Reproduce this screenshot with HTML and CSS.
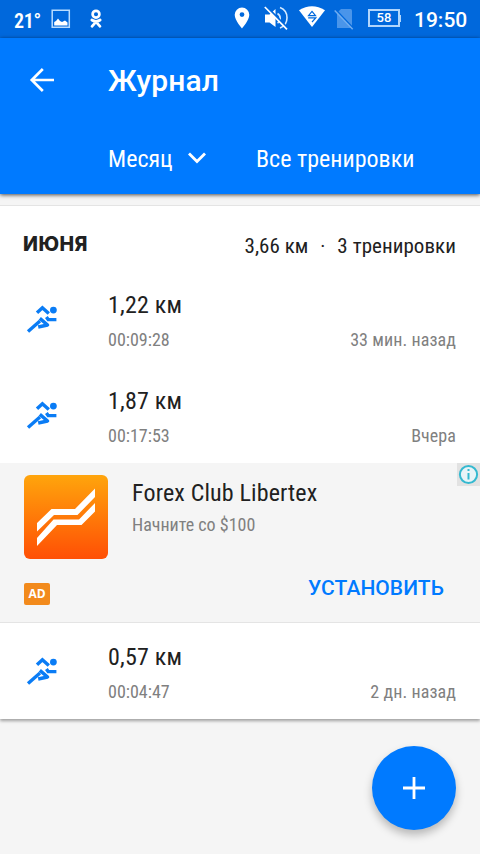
FILE: index.html
```html
<!DOCTYPE html>
<html lang="ru">
<head>
<meta charset="utf-8">
<title>Журнал</title>
<link rel="stylesheet" href="styles.css">
</head>
<body>
<svg class="defs" width="0" height="0">
  <symbol id="runner" viewBox="0 0 36 36">
    <circle cx="29.4" cy="9.1" r="3.4" fill="#0a7cf5"/>
    <g fill="none" stroke="#0a7cf5" stroke-width="3.4">
      <path d="M13 11.8 18.4 6.8 24.8 12.6"/>
      <path d="M32.4 18.6H24.2L22.4 16"/>
      <path d="M4 30.5 16 20"/>
      <path d="M15.8 17.4 23.6 24 14.2 26" stroke-linejoin="round"/>
    </g>
  </symbol>
</svg>
<div class="status">
  <span class="temp">21°</span>
  <svg class="s-pic" width="20" height="20" viewBox="0 0 20 20"><path d="M1.2 1.2H18.3V18.3H1.2Z" fill="none" stroke="#b8dcff" stroke-width="1.5"/><path d="M3.2 16.5V13L5 12 7 9.5 9 12 11 13 14 11.5 16.5 13.5V16.5Z" fill="#fff"/></svg>
  <svg class="s-ok" width="14" height="20" viewBox="0 0 14 20"><circle cx="7" cy="5.2" r="3.4" fill="none" stroke="#fff" stroke-width="2.7"/><path d="M2.8 11Q7 13.7 11.2 11M7 12.8 3 17.3M7 12.8 11 17.3" fill="none" stroke="#fff" stroke-width="2.7" stroke-linecap="round"/></svg>
  <svg class="s-pin" width="16" height="22" viewBox="0 0 16 22"><path fill="#fff" fill-rule="evenodd" d="M8 .5A7.3 7.3 0 0 0 .7 7.8C.7 13.2 8 21.5 8 21.5S15.3 13.2 15.3 7.8A7.3 7.3 0 0 0 8 .5ZM8 5.2a2.4 2.4 0 1 1 0 4.8 2.4 2.4 0 0 1 0-4.8Z"/></svg>
  <svg class="s-mute" width="24" height="24" viewBox="0 0 24 24"><path d="M1 8.5H5.5L11.5 3V21L5.5 16.5H1Z" fill="#fff"/><path d="M13.5 7.5A5.5 5.5 0 0 1 13.5 17M16 1.5A11 11 0 0 1 16 22" fill="none" stroke="#d4eaff" stroke-width="1.6"/><path d="M2.2 .2 24 22.3" stroke="#0068dc" stroke-width="2"/><path d="M.8 1 23 23.3" stroke="#fff" stroke-width="1.7"/></svg>
  <svg class="s-wifi" width="26" height="22" viewBox="0 0 26 22"><path d="M0 4.2Q13-3.5 26 4.2L13 21Z" fill="#fff"/><path d="M13 5.4 16.5 9.7H9.5ZM9.2 11.8H16.8L13 16" fill="none" stroke="#0068dc" stroke-width="1.2"/></svg>
  <svg class="s-sim" width="20" height="22" viewBox="0 0 20 22"><path d="M7 1H16.5Q18 1 18 2.5V20H3V5Z" fill="#4a95ea"/><path d="M1.5 1.5 19.5 20.5" stroke="#0068dc" stroke-width="1.8"/><path d="M.7 2.5 18.7 21.3" stroke="#70adf0" stroke-width="1.5"/></svg>
  <span class="battery">58</span>
  <span class="clock">19:50</span>
</div>
<header class="appbar">
  <div class="titlebar">
    <svg class="back" width="26" height="26" viewBox="0 0 26 26"><path d="M25 13H2.5M13.8 2 2.8 13 13.8 24" fill="none" stroke="#fff" stroke-width="2.7"/></svg>
    <h1>Журнал</h1>
  </div>
  <div class="filters">
    <span class="period">Месяц</span>
    <svg class="chev" width="20" height="14" viewBox="0 0 20 14"><path d="M2 2.5 10 10.5 18 2.5" fill="none" stroke="#fff" stroke-width="2.8"/></svg>
    <span class="kind">Все тренировки</span>
  </div>
</header>
<main class="list">
  <div class="month"><h2>ИЮНЯ</h2><div class="totals"><span>3,66 км</span><span class="dot">·</span><span>3 тренировки</span></div></div>
  <div class="row"><svg class="run"><use href="#runner"/></svg><div class="info"><div class="dist">1,22 км</div><div class="meta"><span>00:09:28</span><span class="ago">33 мин. назад</span></div></div></div>
  <div class="row"><svg class="run"><use href="#runner"/></svg><div class="info"><div class="dist">1,87 км</div><div class="meta"><span>00:17:53</span><span class="ago">Вчера</span></div></div></div>
  <section class="ad">
    <div class="ad-top">
      <svg width="84" height="84" viewBox="0 0 84 84"><defs><linearGradient id="g" x2="0" y2="1"><stop offset="0" stop-color="#ffa50c"/><stop offset="1" stop-color="#ff4f05"/></linearGradient></defs><rect width="84" height="84" rx="6" fill="url(#g)"/><path d="M13 48 27.5 34H51L71 13.5V22L53.5 40H30L13 56.5ZM13 63 29.5 44.5H55L71 28V36.5L57.5 50H33L13 71Z" fill="#fff"/></svg>
      <div class="ad-text"><div class="dist">Forex Club Libertex</div><div class="ad-sub">Начните со $100</div></div>
    </div>
    <div class="ad-bottom"><span class="badge">AD</span><span class="install">УСТАНОВИТЬ</span></div>
    <svg class="choice" width="23" height="23" viewBox="0 0 23 23"><rect width="23" height="23" fill="#e2e2e2"/><circle cx="11.5" cy="11.5" r="8.6" fill="#e8f4f7" stroke="#35b9d0" stroke-width="2"/><path d="M11.5 6V8M11.5 10V16.5" stroke="#35b9d0" stroke-width="2"/></svg>
  </section>
  <div class="row"><svg class="run"><use href="#runner"/></svg><div class="info"><div class="dist">0,57 км</div><div class="meta"><span>00:04:47</span><span class="ago">2 дн. назад</span></div></div></div>
</main>
<div class="fab"><svg width="22" height="22" viewBox="0 0 22 22"><path d="M11 0V22M0 11H22" stroke="#fff" stroke-width="2.8"/></svg></div>
</body>
</html>
```
FILE: styles.css
```css
* { box-sizing: border-box; }
body { margin: 0; width: 480px; height: 854px; overflow: hidden; background: #f5f5f5; font-family: "Roboto Condensed", Roboto, sans-serif; font-stretch: 75%; color: #212121; }
h1, h2 { margin: 0; }
.defs { display: block; }
.status { height: 38px; background: #0068dc; color: #fff; display: flex; align-items: flex-start; }
.status > * { flex: none; }
.temp { margin: 10px 0 0 14px; width: 37px; font-size: 20px; line-height: 22px; font-weight: 600; letter-spacing: -0.3px; }
.s-pic { margin-top: 9px; }
.s-ok { margin: 9px 0 0 18px; }
.s-pin { margin: 7px 0 0 131px; }
.s-mute { margin: 6px 0 0 14px; }
.s-wifi { margin: 6px 0 0 11px; }
.s-sim { margin: 8px 0 0 9px; }
.battery { position: relative; margin: 9px 0 0 14px; width: 32px; height: 18px; border: 2px solid #b0d5fc; font: 500 13px/14px Roboto, sans-serif; text-align: center; }
.battery::after { content: ""; position: absolute; left: 29px; top: 4px; width: 2px; height: 7px; background: #b0d5fc; }
.clock { margin: 8px 0 0 14px; font: 500 21px/24px Roboto, sans-serif; }
.appbar { position: relative; height: 156px; background: #007aff; color: #fff; box-shadow: 0 1px 4px rgba(0,0,0,.7); }
.titlebar { height: 84px; display: flex; align-items: center; padding-left: 29px; }
h1 { margin-left: 53px; padding-top: 2px; font: 500 30px/36px Roboto, sans-serif; letter-spacing: .15px; }
.filters { height: 72px; padding-left: 108px; display: flex; align-items: center; font-size: 24px; line-height: 28px; }
.period, .kind { padding-top: 2px; }
.period { width: 79px; }
.chev { margin-right: 49px; }
.list { margin-top: 11px; border-top: 1px solid #e4e4e4; background: #fff; box-shadow: 0 2px 3px rgba(0,0,0,.35); clip-path: inset(0 0 -8px 0); }
.month { height: 65px; padding: 0 24px; display: flex; justify-content: space-between; align-items: flex-start; }
h2 { margin: 25px 0 0 -1px; font: 800 19.5px/26px Inter, "Open Sans", sans-serif; letter-spacing: .5px; }
.totals { margin-top: 27px; display: flex; font-size: 21px; line-height: 26px; }
.dot { width: 29px; text-align: center; }
.totals span:last-child { letter-spacing: .06px; }
.row { height: 96px; padding: 0 24px; display: flex; }
.run { width: 36px; height: 36px; margin-top: 30px; }
.info { flex: 1; margin-left: 48px; padding-top: 20px; }
.dist { font-size: 24px; line-height: 28px; letter-spacing: .2px; }
.meta { margin-top: 10px; display: flex; justify-content: space-between; font-size: 18px; line-height: 22px; color: #808080; }
.ago { letter-spacing: .08px; }
.ad { position: relative; height: 160px; padding: 12px 24px 0; background: #f5f5f5; border-bottom: 1px solid #e4e4e4; }
.ad-top { display: flex; height: 84px; }
.ad-text { margin-left: 24px; padding-top: 4px; }
.ad-text .dist { letter-spacing: .15px; }
.ad-sub { margin-top: 7px; font-size: 18px; line-height: 22px; color: #808080; }
.ad-bottom { display: flex; justify-content: space-between; align-items: flex-start; }
.badge { margin-top: 24px; width: 26px; height: 22px; border-radius: 2px; background: #f28a1c; color: #fff; font: 700 12px/22px "Open Sans", sans-serif; text-align: center; }
.install { margin: 15px 12px 0 0; color: #007aff; font: 500 21px/28px Roboto, sans-serif; letter-spacing: .06px; }
.choice { position: absolute; right: 0; top: 0; }
.fab { position: absolute; left: 372px; top: 746px; width: 84px; height: 84px; border-radius: 50%; background: #007aff; box-shadow: 0 5px 8px rgba(0,0,0,.25); display: flex; align-items: center; justify-content: center; }
```
